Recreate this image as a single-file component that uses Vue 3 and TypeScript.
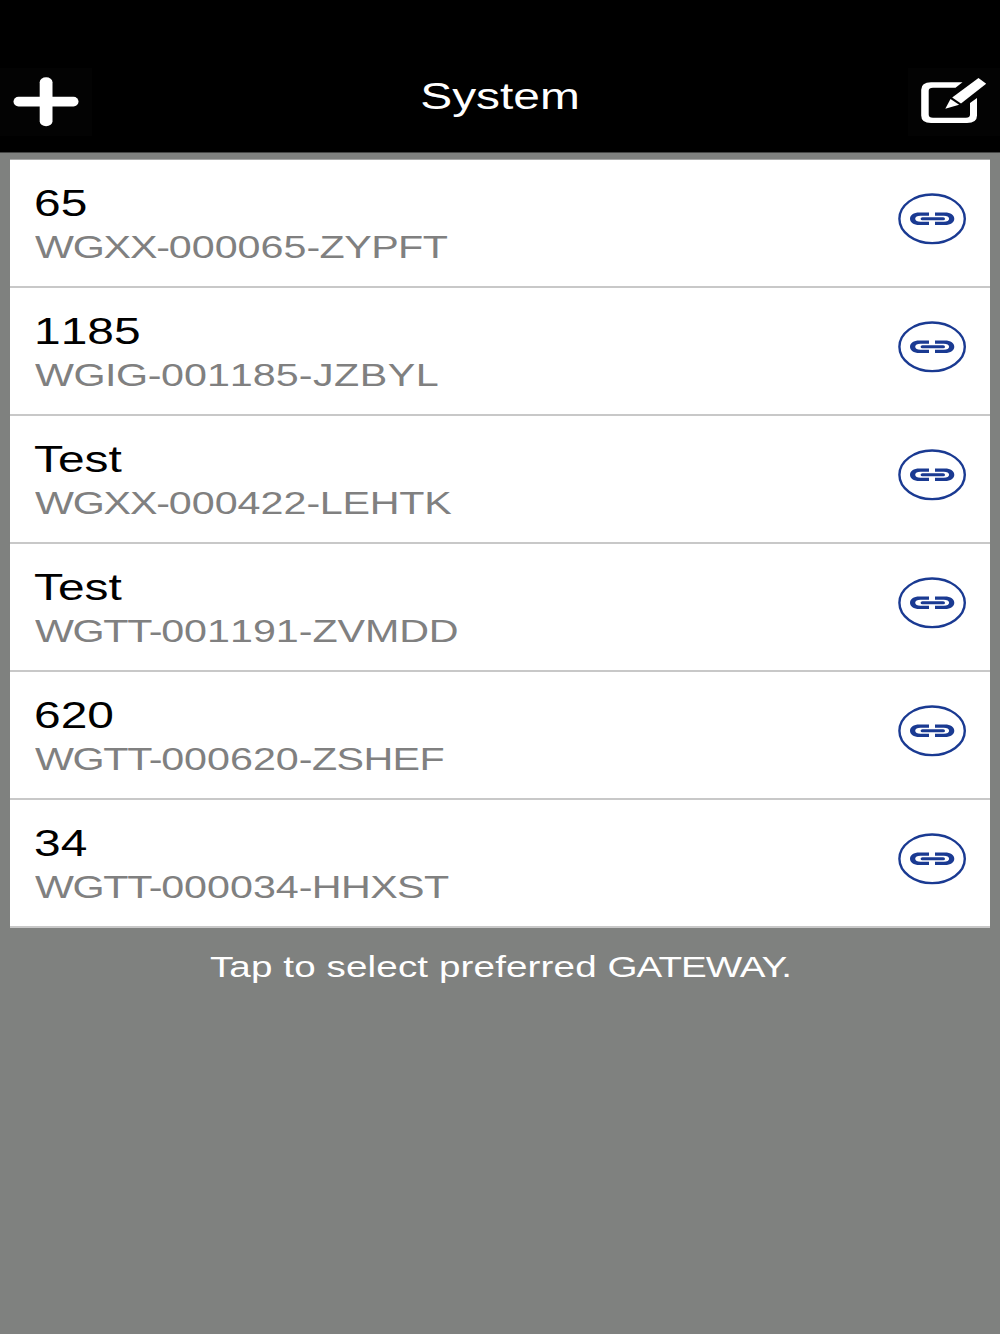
<script setup lang="ts">
interface Gateway {
  name: string
  prefix: string
  number: string
  suffix: string
  prefixSpacing: number
  suffixSpacing: number
}

const gateways: Gateway[] = [
  { name: '65', prefix: 'WGXX-', number: '000065', suffix: '-ZYPFT', prefixSpacing: -0.89, suffixSpacing: -0.42 },
  { name: '1185', prefix: 'WGIG-', number: '001185', suffix: '-JZBYL', prefixSpacing: -0.33, suffixSpacing: 0.38 },
  { name: 'Test', prefix: 'WGXX-', number: '000422', suffix: '-LEHTK', prefixSpacing: -0.89, suffixSpacing: -0.2 },
  { name: 'Test', prefix: 'WGTT-', number: '001191', suffix: '-ZVMDD', prefixSpacing: -1, suffixSpacing: -0.07 },
  { name: '620', prefix: 'WGTT-', number: '000620', suffix: '-ZSHEF', prefixSpacing: -1, suffixSpacing: -0.44 },
  { name: '34', prefix: 'WGTT-', number: '000034', suffix: '-HHXST', prefixSpacing: -1, suffixSpacing: -0.47 },
]

const tracking = (n: number) => ({ letterSpacing: `${n}px` })
</script>

<template>
  <div class="screen">
    <header class="bar">
      <svg class="add" width="92" height="72" viewBox="0 0 92 72">
        <rect width="92" height="68" fill="#030303" />
        <rect x="13.5" y="28.7" width="65" height="9.8" rx="5" ry="4.9" fill="#fff" />
        <rect x="39.7" y="9.2" width="12.8" height="49" rx="6.4" ry="5" fill="#fff" />
      </svg>
      <h1 class="title">System</h1>
      <svg class="edit" width="92" height="72" viewBox="0 0 92 72">
        <rect width="92" height="68" fill="#030303" />
        <path d="M54.5 14.2H23Q13.2 14.2 13.2 21.7V47.5Q13.2 55 23 55H59Q69 55 69 47.5V30L62 35V46.5Q62 49.7 58 49.7H25Q20.7 49.7 20.7 46.5V22.8Q20.7 19.8 25 19.8H47.5Z" fill="#fff" />
        <path d="M70.5 10L78.2 15.8L53 35.4L44.2 29.6Z" fill="#fff" />
        <path d="M42.5 31L51.1 36.8L37.3 40.8Z" fill="#fff" />
      </svg>
    </header>

    <ul class="list">
      <li v-for="g in gateways" :key="g.number" class="row">
        <div class="info">
          <span class="name" :class="{ plain: g.name === '1185' }">{{ g.name }}</span>
          <span class="serial"><span :style="tracking(g.prefixSpacing)">{{ g.prefix }}</span><span class="plain">{{ g.number }}</span><span :style="tracking(g.suffixSpacing)">{{ g.suffix }}</span></span>
        </div>
        <svg class="link" width="68" height="52" viewBox="0 0 68 52">
          <ellipse cx="34.1" cy="25.8" rx="32.7" ry="24.3" fill="none" stroke="#1a3a92" stroke-width="2.4" />
          <g fill="#1a3a92">
            <path d="M31 19.4H21.5C15.5 19.4 12 22 12 25.7S15.5 32 21.5 32H31V28.7H22.5C19.3 28.7 17.2 27.6 17.2 25.7S19.3 22.7 22.5 22.7H31Z" />
            <path d="M37 19.4H46.8C52.8 19.4 56.3 22 56.3 25.7S52.8 32 46.8 32H37V28.7H45.8C49 28.7 51.1 27.6 51.1 25.7S49 22.7 45.8 22.7H37Z" />
            <rect x="22.6" y="24.2" width="24.4" height="3.1" rx="1.8" ry="1.5" />
          </g>
        </svg>
      </li>
    </ul>

    <p class="hint">Tap to select preferred <span class="caps">GATEWAY.</span></p>
  </div>
</template>

<style>
body {
  margin: 0;
  background: #7f817f;
}
</style>

<style scoped>
.screen {
  display: flex;
  flex-direction: column;
  height: 1334px;
  overflow: hidden;
  background: #7f817f;
  font-family: "Liberation Sans", Arial, sans-serif;
}
.bar {
  display: flex;
  justify-content: space-between;
  box-sizing: border-box;
  height: 153px;
  padding-top: 68px;
  border-bottom: 1px solid #444544;
  background: #000;
}
.title {
  margin: 7px 0 0;
  font-size: 36px;
  font-weight: 400;
  line-height: 44px;
  color: #fff;
  transform: scaleX(1.33);
}
.list {
  margin: 6px 10px 0;
  padding: 0;
  border-top: 1px solid #a9aaa9;
  list-style: none;
}
.row {
  display: flex;
  justify-content: space-between;
  box-sizing: border-box;
  height: 128px;
  padding: 22px 24px 0;
  border-bottom: 2px solid #c8c8c8;
  background: #fff;
}
.info {
  display: flex;
  flex-direction: column;
  align-items: flex-start;
}
.name,
.serial {
  transform: scaleX(1.33);
  transform-origin: 0 50%;
  white-space: nowrap;
}
.name {
  font-size: 36px;
  line-height: 44px;
  color: #000;
}
.serial {
  margin: 2px 0 0 0.5px;
  font-size: 31px;
  line-height: 40px;
  color: #808080;
}
.plain {
  font-kerning: none;
}
.link {
  margin-top: 11px;
}
.hint {
  align-self: center;
  margin: 19px 0 0;
  font-size: 29px;
  line-height: 40px;
  letter-spacing: 0.1px;
  color: #fff;
  white-space: nowrap;
  transform: scaleX(1.33);
}
.caps {
  letter-spacing: -0.75px;
}
</style>
